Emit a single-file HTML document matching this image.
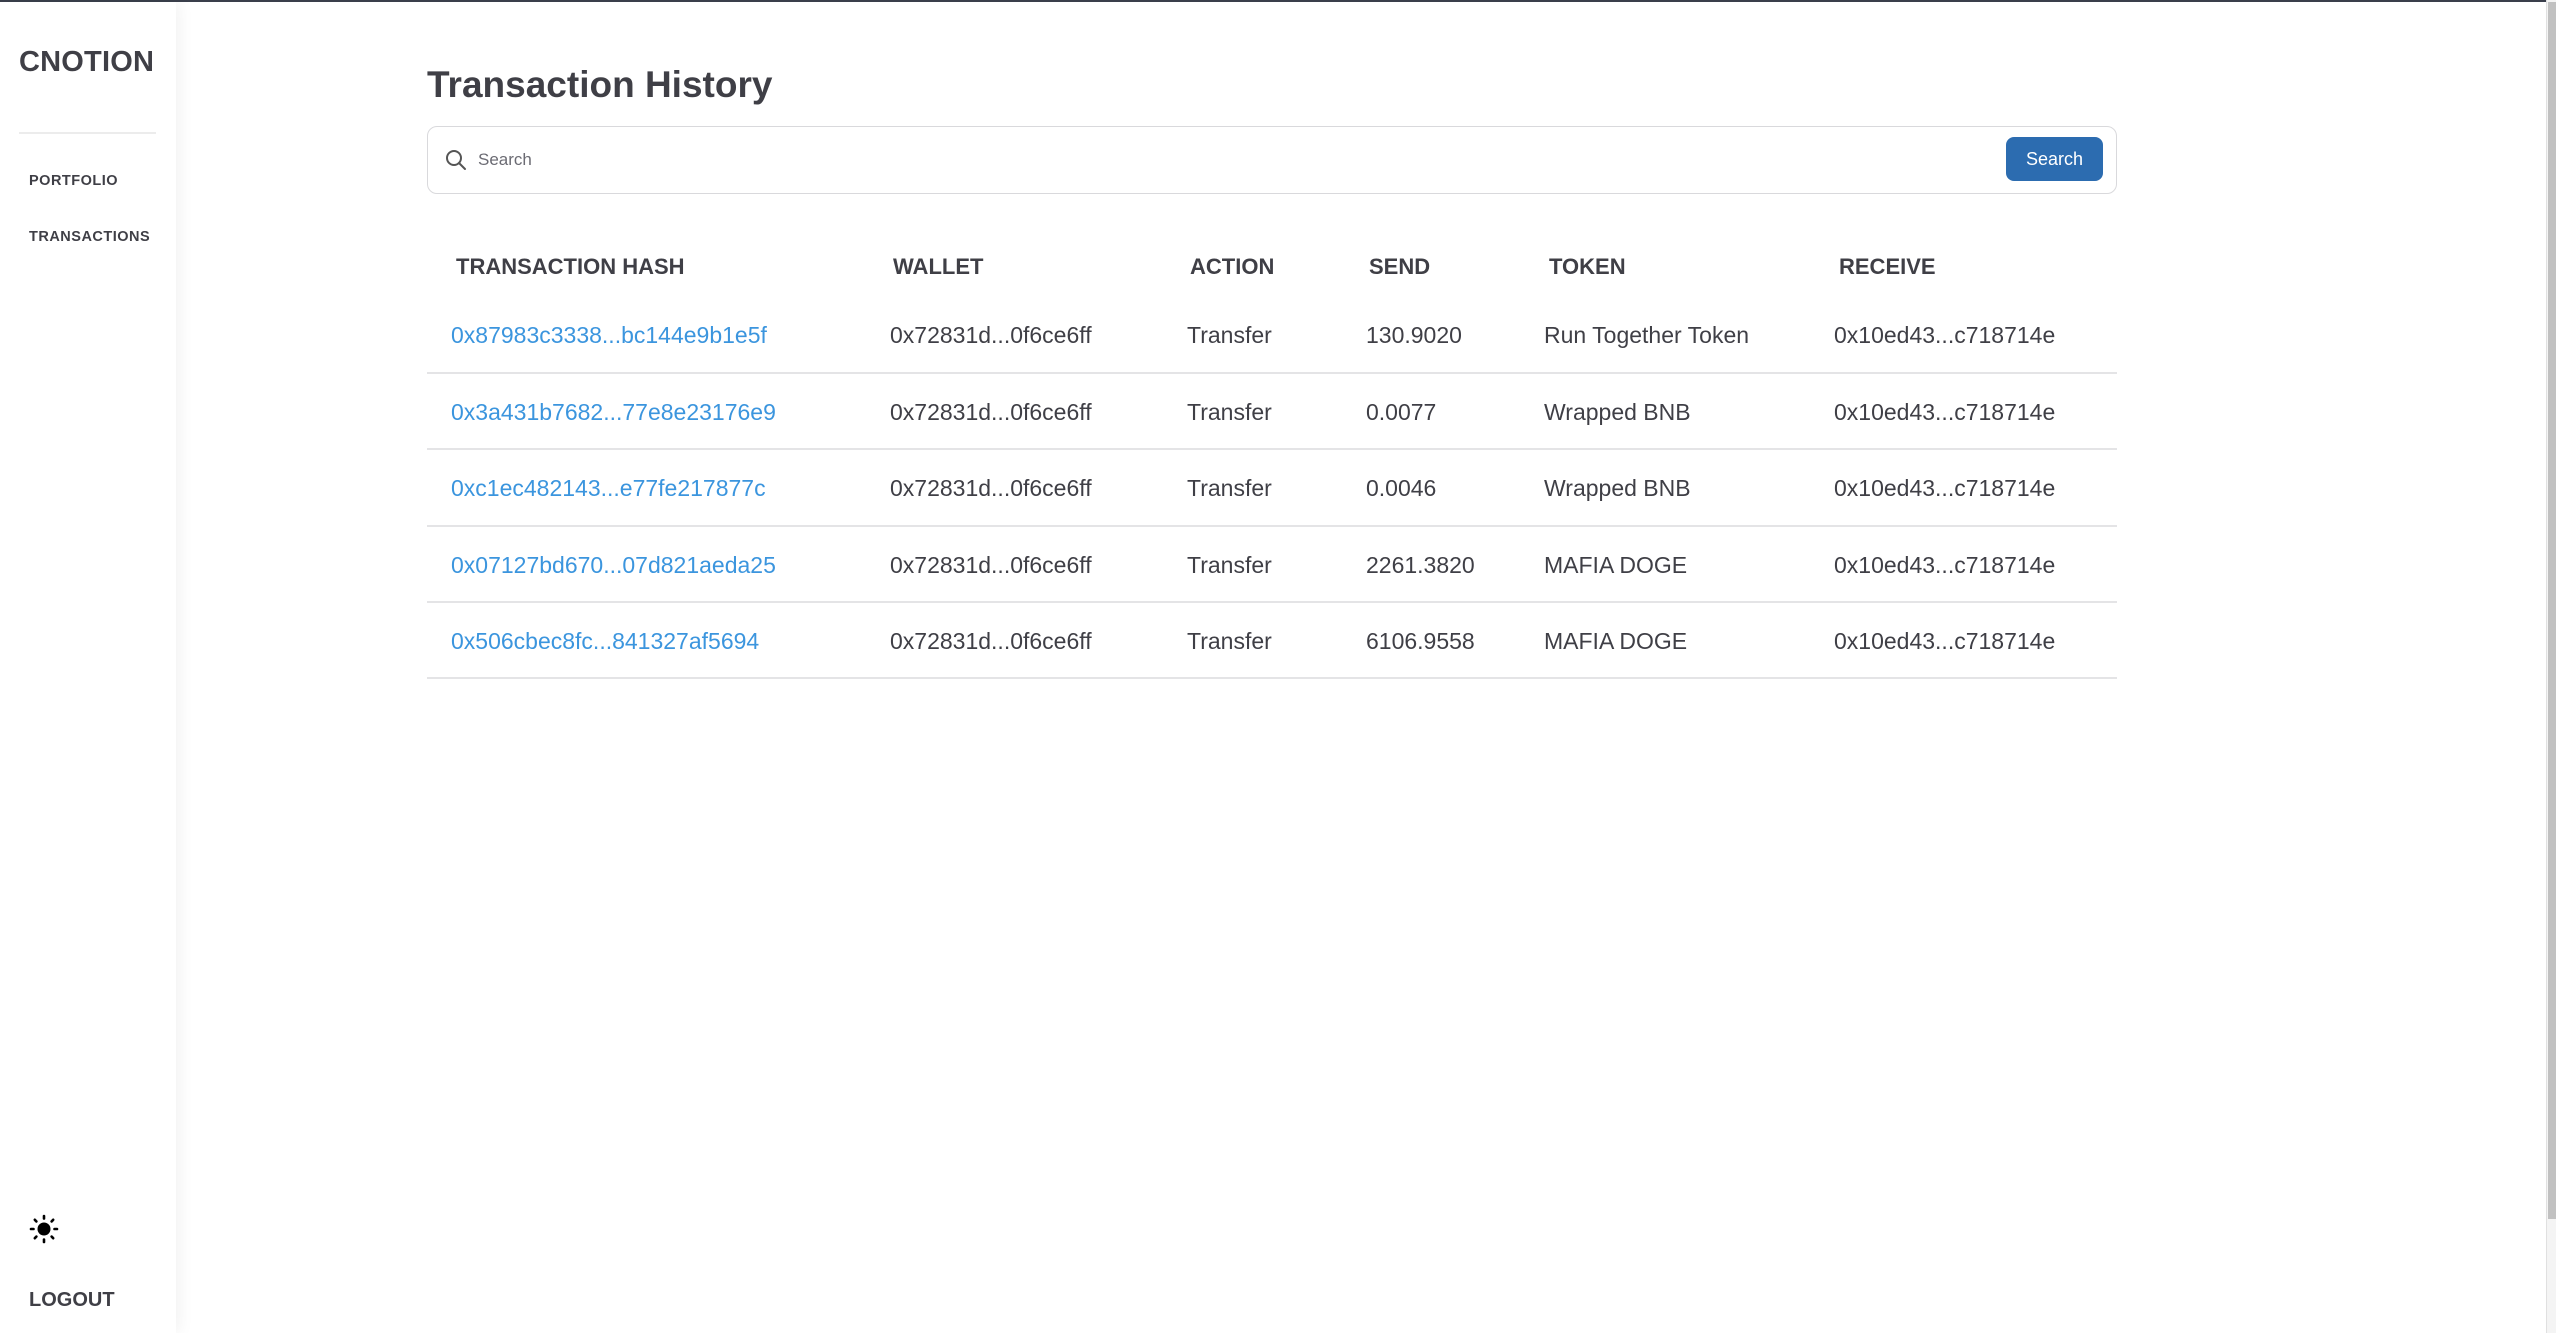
<!DOCTYPE html>
<html><head><meta charset="utf-8"><style>
*{margin:0;padding:0;box-sizing:border-box}
html,body{width:2556px;height:1333px;overflow:hidden;background:#fff;font-family:"Liberation Sans",sans-serif;color:#3f3f46}
.topline{position:absolute;left:0;top:0;width:2556px;height:2px;background:#3a3f4b}
.side{position:absolute;left:0;top:2px;width:176px;height:1331px;background:#fff;box-shadow:4px 0 14px rgba(0,0,0,0.05)}
.abs{position:absolute;white-space:nowrap}
.logo{left:19px;top:44px;font-size:29px;font-weight:bold;color:#3f3f46;letter-spacing:0.2px}
.div{position:absolute;left:19px;top:130px;width:137px;height:2px;background:#ececec}
.nav{font-size:14.5px;font-weight:bold;letter-spacing:0.5px;color:#3f3f46}
.title{left:427px;top:64px;font-size:37px;font-weight:bold;color:#3f3f46}
.search{position:absolute;left:427px;top:126px;width:1690px;height:68px;border:1.5px solid #d9d9dc;border-radius:10px}
.ph{left:50px;top:23px;font-size:17px;color:#6b6b73}
.btn{position:absolute;left:1578px;top:10px;width:97px;height:44px;background:#2c6cb0;border-radius:8px;color:#fff;font-size:18px;text-align:center;line-height:44px}
.th{top:254px;font-size:22px;font-weight:bold;color:#3f3f46}
.td{font-size:23px;color:#3f3f46}
.link{color:#3b95de}
.sep{position:absolute;left:427px;width:1690px;height:2px;background:#e4e4e6}
.sb{position:absolute;left:2546px;top:0;width:10px;height:1333px;background:#f4f4f4;border-left:1px solid #e0e0e0}
.thumb{position:absolute;left:2548px;top:2px;width:8px;height:1217px;background:#c1c1c1}
</style></head><body>
<div class="topline"></div>
<div class="side">
<div class="abs logo">CNOTION</div>
<div class="div"></div>
<div class="abs nav" style="left:29px;top:171px">PORTFOLIO</div>
<div class="abs nav" style="left:29px;top:227px">TRANSACTIONS</div>
<svg class="abs" style="left:29px;top:1212px" width="30" height="30" viewBox="0 0 30 30">
<circle cx="15" cy="15" r="6.5" fill="#000"/>
<g stroke="#000" stroke-width="2.6" stroke-linecap="round">
<line x1="15" y1="2" x2="15" y2="4.5"/><line x1="15" y1="25.5" x2="15" y2="28"/>
<line x1="2" y1="15" x2="4.5" y2="15"/><line x1="25.5" y1="15" x2="28" y2="15"/>
<line x1="5.8" y1="5.8" x2="7.4" y2="7.4"/><line x1="22.6" y1="22.6" x2="24.2" y2="24.2"/>
<line x1="24.2" y1="5.8" x2="22.6" y2="7.4"/><line x1="5.8" y1="24.2" x2="7.4" y2="22.6"/>
</g></svg>
<div class="abs" style="left:29px;top:1287px;font-size:20px;font-weight:bold;color:#3f3f46">LOGOUT</div>
</div>
<div class="abs title">Transaction History</div>
<div class="search">
<svg class="abs" style="left:16px;top:21px" width="24" height="24" viewBox="0 0 24 24"><circle cx="10" cy="10" r="7" fill="none" stroke="#555" stroke-width="2"/><line x1="15" y1="15" x2="21" y2="21" stroke="#555" stroke-width="2" stroke-linecap="round"/></svg>
<div class="abs ph">Search</div>
<div class="btn">Search</div>
</div>
<div class="abs th" style="left:456px">TRANSACTION HASH</div>
<div class="abs th" style="left:893px">WALLET</div>
<div class="abs th" style="left:1190px">ACTION</div>
<div class="abs th" style="left:1369px">SEND</div>
<div class="abs th" style="left:1549px">TOKEN</div>
<div class="abs th" style="left:1839px">RECEIVE</div>

<div class="abs td link" style="left:451px;top:322px">0x87983c3338...bc144e9b1e5f</div>
<div class="abs td" style="left:890px;top:322px">0x72831d...0f6ce6ff</div>
<div class="abs td" style="left:1187px;top:322px">Transfer</div>
<div class="abs td" style="left:1366px;top:322px">130.9020</div>
<div class="abs td" style="left:1544px;top:322px">Run Together Token</div>
<div class="abs td" style="left:1834px;top:322px">0x10ed43...c718714e</div>
<div class="sep" style="top:372px"></div>

<div class="abs td link" style="left:451px;top:399px">0x3a431b7682...77e8e23176e9</div>
<div class="abs td" style="left:890px;top:399px">0x72831d...0f6ce6ff</div>
<div class="abs td" style="left:1187px;top:399px">Transfer</div>
<div class="abs td" style="left:1366px;top:399px">0.0077</div>
<div class="abs td" style="left:1544px;top:399px">Wrapped BNB</div>
<div class="abs td" style="left:1834px;top:399px">0x10ed43...c718714e</div>
<div class="sep" style="top:448px"></div>

<div class="abs td link" style="left:451px;top:475px">0xc1ec482143...e77fe217877c</div>
<div class="abs td" style="left:890px;top:475px">0x72831d...0f6ce6ff</div>
<div class="abs td" style="left:1187px;top:475px">Transfer</div>
<div class="abs td" style="left:1366px;top:475px">0.0046</div>
<div class="abs td" style="left:1544px;top:475px">Wrapped BNB</div>
<div class="abs td" style="left:1834px;top:475px">0x10ed43...c718714e</div>
<div class="sep" style="top:525px"></div>

<div class="abs td link" style="left:451px;top:552px">0x07127bd670...07d821aeda25</div>
<div class="abs td" style="left:890px;top:552px">0x72831d...0f6ce6ff</div>
<div class="abs td" style="left:1187px;top:552px">Transfer</div>
<div class="abs td" style="left:1366px;top:552px">2261.3820</div>
<div class="abs td" style="left:1544px;top:552px">MAFIA DOGE</div>
<div class="abs td" style="left:1834px;top:552px">0x10ed43...c718714e</div>
<div class="sep" style="top:601px"></div>

<div class="abs td link" style="left:451px;top:628px">0x506cbec8fc...841327af5694</div>
<div class="abs td" style="left:890px;top:628px">0x72831d...0f6ce6ff</div>
<div class="abs td" style="left:1187px;top:628px">Transfer</div>
<div class="abs td" style="left:1366px;top:628px">6106.9558</div>
<div class="abs td" style="left:1544px;top:628px">MAFIA DOGE</div>
<div class="abs td" style="left:1834px;top:628px">0x10ed43...c718714e</div>
<div class="sep" style="top:677px"></div>

<div class="sb"></div>
<div class="thumb"></div>
</body></html>
